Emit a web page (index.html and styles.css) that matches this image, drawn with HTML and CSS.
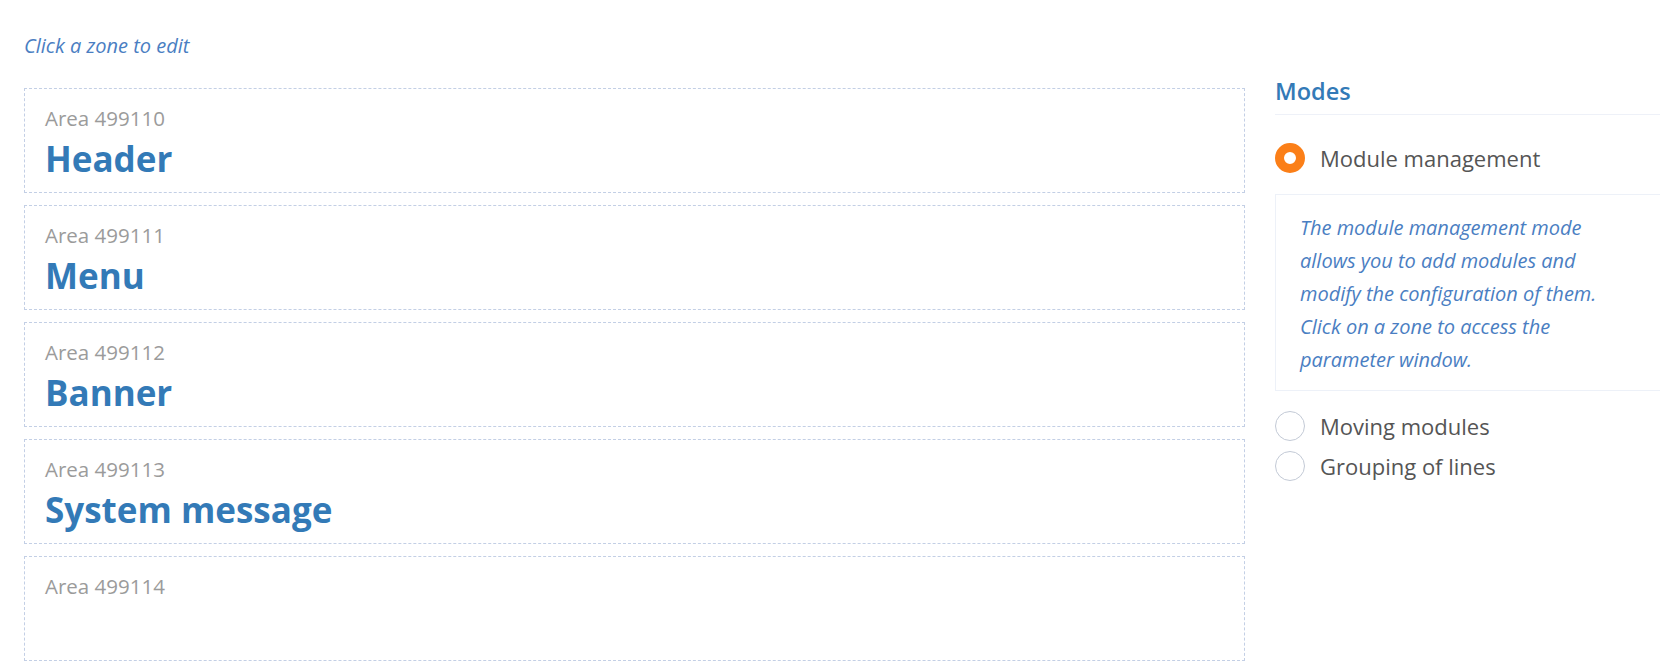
FILE: index.html
```html
<!DOCTYPE html>
<html lang="en">
<head>
<meta charset="utf-8">
<title>Zones</title>
<link rel="stylesheet" href="styles.css">
</head>
<body>
<div class="page">
  <p class="hint">Click a zone to edit</p>
  <div class="layout">
    <div class="zones">
      <div class="zone">
        <div class="zone-id">Area 499110</div>
        <div class="zone-name">Header</div>
      </div>
      <div class="zone">
        <div class="zone-id">Area 499111</div>
        <div class="zone-name">Menu</div>
      </div>
      <div class="zone">
        <div class="zone-id">Area 499112</div>
        <div class="zone-name">Banner</div>
      </div>
      <div class="zone">
        <div class="zone-id">Area 499113</div>
        <div class="zone-name">System message</div>
      </div>
      <div class="zone">
        <div class="zone-id">Area 499114</div>
      </div>
    </div>
    <aside class="modes">
      <h3 class="modes-title">Modes</h3>
      <div class="mode mode-active">
        <span class="radio radio-on"></span>
        <span class="mode-label">Module management</span>
      </div>
      <div class="mode-desc">
        <p class="mode-desc-text">The module management mode allows you to add modules and modify the configuration of them. Click on a zone to access the parameter window.</p>
      </div>
      <div class="mode mode-first">
        <span class="radio"></span>
        <span class="mode-label">Moving modules</span>
      </div>
      <div class="mode mode-next">
        <span class="radio"></span>
        <span class="mode-label">Grouping of lines</span>
      </div>
    </aside>
  </div>
</div>
</body>
</html>
```

FILE: styles.css
```css
* { box-sizing: border-box; }

html, body {
  margin: 0;
  padding: 0;
  background: #ffffff;
  overflow: hidden;
}

body {
  font-family: "Open Sans", "Noto Sans", sans-serif;
  color: #555555;
}

.page {
  padding: 33px 0 0 24px;
  width: 1660px;
}

.hint {
  margin: 0;
  font-size: 20px;
  line-height: 26px;
  font-style: italic;
  color: #4a7ec2;
}

.layout {
  margin-top: 17px;
  display: grid;
  grid-template-columns: 1221px 1fr;
  column-gap: 30px;
}

.zones {
  padding-top: 12px;
  display: flex;
  flex-direction: column;
  gap: 12px;
}

.zone {
  height: 105px;
  border: 1px dashed #c3cfe5;
  padding: 16px 20px 0 20px;
}

.zone-id {
  font-size: 20.5px;
  line-height: 27px;
  color: #9b9b9b;
}

.zone-name {
  margin-top: 5px;
  font-size: 35px;
  line-height: 44px;
  font-weight: 700;
  color: #337ab7;
}

.modes {
  min-width: 0;
}

.modes-title {
  margin: 0;
  font-size: 23.5px;
  line-height: 30px;
  font-weight: 600;
  color: #337ab7;
  padding-bottom: 8px;
  border-bottom: 1px solid #eef1f8;
}

.mode {
  display: flex;
  align-items: center;
  gap: 15px;
  height: 30px;
}

.mode-active { margin-top: 28px; }
.mode-first { margin-top: 20px; }
.mode-next { margin-top: 10px; }

.radio {
  flex: none;
  width: 30px;
  height: 30px;
  border-radius: 50%;
  border: 1px solid #c3cad6;
  background: #fff;
}

.radio-on {
  border: 9px solid #fb7f18;
  background: #fff;
}

.mode-label {
  font-size: 22px;
  line-height: 30px;
  color: #555555;
}

.mode-desc {
  margin-top: 21px;
  height: 197px;
  border: 1px solid #edf1f8;
  border-right: 0;
  padding: 16px 24px;
}

.mode-desc-text {
  margin: 0;
  max-width: 315px;
  font-size: 20px;
  line-height: 33px;
  font-style: italic;
  color: #4a7ec2;
}
```
